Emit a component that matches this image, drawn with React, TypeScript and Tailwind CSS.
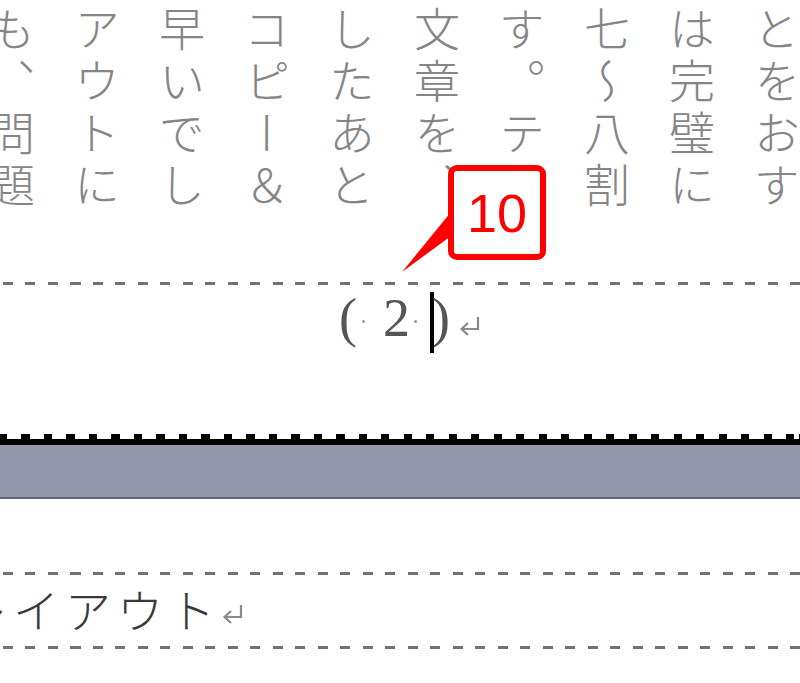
const columns = [
  "も、問題",
  "アウトに",
  "早いでし",
  "コピー＆",
  "したあと",
  "文章を、",
  "す。テキ",
  "七〜八割",
  "は完璧に",
  "とをおす",
];

const Dashes = () => (
  <div className="h-[3px] w-full bg-[repeating-linear-gradient(to_right,#727272_0px,#727272_10px,transparent_10px,transparent_22.5px)] bg-[position:3px_0]" />
);

const ReturnMark = ({ className }: { className?: string }) => (
  <svg width="24" height="20" viewBox="0 0 24 20" className={className}>
    <path d="M20 1 V13 H4" fill="none" stroke="#8a8a8a" strokeWidth="2.2" />
    <path d="M10 7 L3.5 13 L10 19" fill="none" stroke="#8a8a8a" strokeWidth="2.2" />
  </svg>
);

const Dot = ({ className }: { className?: string }) => (
  <div className={"h-[3px] w-[3px] rounded-full bg-[#9a9a9a] " + (className ?? "")} />
);

export default function App() {
  return (
    <div className="relative h-[683px] w-[800px] overflow-hidden bg-white">
      {/* vertical text columns */}
      <div className="h-[282px] overflow-hidden">
        <div className="-ml-[31px] flex h-full pt-[6px]">
          {columns.map((c) => (
            <div
              key={c}
              className="h-full w-[85px] shrink-0 font-['Noto_Sans_CJK_JP',sans-serif] text-[46px] font-light leading-[85px] tracking-[6px] text-[#858585] [writing-mode:vertical-rl]"
            >
              {c}
            </div>
          ))}
        </div>
      </div>

      <Dashes />

      {/* footer: page number */}
      <div className="flex h-[149px] items-start pt-[6px] pl-[339px] font-['Liberation_Serif',serif] text-[54px] leading-[54px] text-[#555]">
        <span>(</span>
        <Dot className="ml-[5px] mt-[29px]" />
        <span className="ml-[18px]">2</span>
        <Dot className="ml-[4px] mt-[29px]" />
        <div className="ml-[13px] mt-[1px] h-[61px] w-[4px] bg-black" />
        <span className="-ml-[2px]">)</span>
        <ReturnMark className="ml-[8px] mt-[25px]" />
      </div>

      {/* section divider */}
      <div className="h-[5px] bg-[repeating-linear-gradient(to_right,#000_0px,#000_8px,transparent_8px,transparent_22.5px)] bg-[position:-1px_0]" />
      <div className="h-[6px] bg-black" />
      <div className="h-[52px] bg-[#9297ab]" />
      <div className="h-[2px] bg-[#5e6272]" />

      <div className="h-[73px]" />
      <Dashes />
      <div className="flex h-[71px] items-start pt-[10px] -ml-[39px]">
        <span className="font-['Noto_Sans_CJK_JP',sans-serif] text-[46px] font-light leading-[46px] tracking-[6px] text-[#3a3a3a]">
          レイアウト
        </span>
        <ReturnMark className="mt-[19px]" />
      </div>
      <Dashes />

      {/* callout */}
      <svg
        width="52"
        height="68"
        viewBox="0 0 52 68"
        className="absolute left-[400px] top-[206px]"
      >
        <polygon points="2,66 51,6 51,30" fill="#ff0000" />
      </svg>
      <div className="absolute left-[448px] top-[165px] flex h-[95px] w-[98px] items-center justify-center rounded-[9px] border-[6px] border-[#ff0000] bg-white font-['Liberation_Sans',sans-serif] text-[54px] leading-none text-[#ff0000]">
        10
      </div>
    </div>
  );
}
